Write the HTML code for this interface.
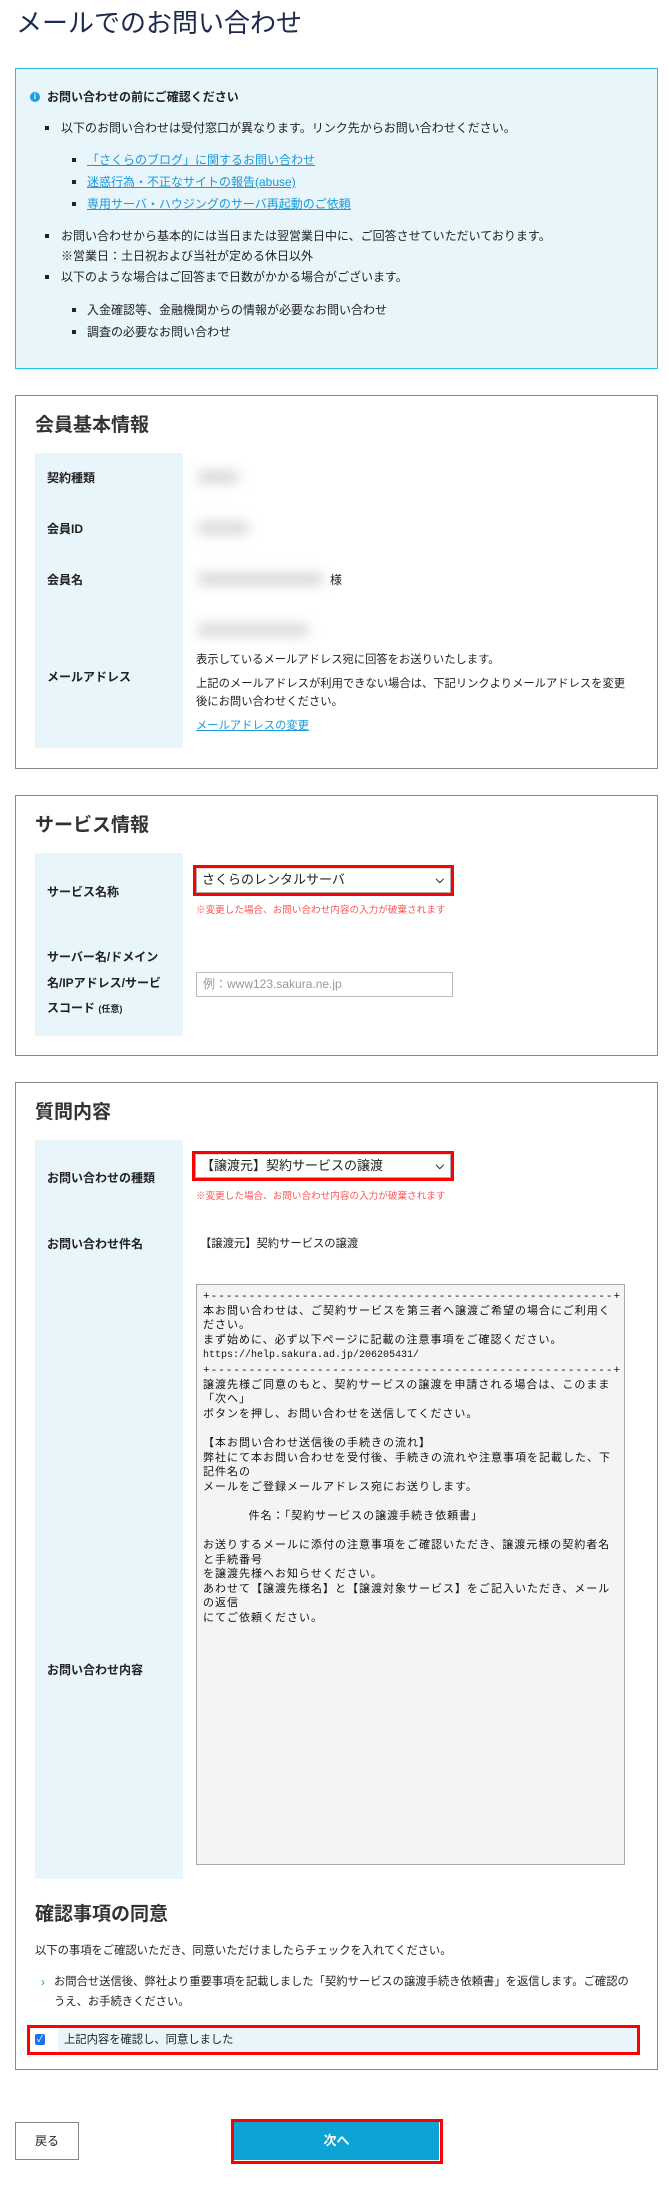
<!DOCTYPE html>
<html><head><meta charset="utf-8"><style>
*{margin:0;padding:0;box-sizing:border-box}
body{width:669px;height:2185px;background:#fff;font-family:"Liberation Sans","Noto Sans CJK JP",sans-serif;color:#222;position:relative;overflow:hidden;font-size:12px}
.a{position:absolute;white-space:nowrap}
.box{position:absolute;left:15px;width:643px;border:1px solid #8a8a8a;background:#fff}
.lab{position:absolute;left:35px;width:148px;background:#e8f6fc}
.h2{position:absolute;left:35px;font-size:19px;font-weight:bold;color:#333;line-height:24px}
.l{position:absolute;left:47px;font-size:12px;font-weight:bold;line-height:16px;color:#222}
.t{line-height:16px;transform:translateY(-8px)}
.s{font-size:11.3px}
.sq{position:absolute;width:4px;height:4px;background:#222}
a{color:#1a9ad6;text-decoration:underline}
.blur{position:absolute;background:#bbb;filter:blur(6px);opacity:.6}
.sel{position:absolute;border:3px solid #f00}
.sel div{width:100%;height:100%;background:#fff;border:1px solid #aaa;border-top:1px solid #ddd;font-size:13px;line-height:22px;padding-left:5px;position:relative}
.note{position:absolute;left:196px;font-size:9.6px;color:#f55;line-height:12px}
</style></head><body>
<div class="a" style="left:16px;top:6px;font-size:26px;line-height:34px;color:#1b2a4e">メールでのお問い合わせ</div>

<div style="position:absolute;left:15px;top:68px;width:643px;height:301px;border:1px solid #1fc3ea;background:#e8f6fc"></div>
<div style="position:absolute;left:30px;top:92px;width:10px;height:10px;border-radius:50%;background:#1b9ee0;color:#fff;font-size:8px;font-weight:bold;text-align:center;line-height:10px">i</div>
<div class="a t" style="left:47px;top:97px;font-weight:bold">お問い合わせの前にご確認ください</div>
<div class="sq" style="left:45px;top:126px"></div><div class="a t" style="left:61px;top:128px">以下のお問い合わせは受付窓口が異なります。リンク先からお問い合わせください。</div>
<div class="sq" style="left:72px;top:158px"></div><div class="a t" style="left:87px;top:160px"><a>「さくらのブログ」に関するお問い合わせ</a></div>
<div class="sq" style="left:72px;top:180px"></div><div class="a t" style="left:87px;top:182px"><a>迷惑行為・不正なサイトの報告(abuse)</a></div>
<div class="sq" style="left:72px;top:202px"></div><div class="a t" style="left:87px;top:204px"><a>専用サーバ・ハウジングのサーバ再起動のご依頼</a></div>
<div class="sq" style="left:45px;top:234px"></div><div class="a t" style="left:61px;top:236px">お問い合わせから基本的には当日または翌営業日中に、ご回答させていただいております。</div>
<div class="a t" style="left:61px;top:256px">※営業日：土日祝および当社が定める休日以外</div>
<div class="sq" style="left:45px;top:275px"></div><div class="a t" style="left:61px;top:277px">以下のような場合はご回答まで日数がかかる場合がございます。</div>
<div class="sq" style="left:72px;top:308px"></div><div class="a t" style="left:87px;top:310px">入金確認等、金融機関からの情報が必要なお問い合わせ</div>
<div class="sq" style="left:72px;top:330px"></div><div class="a t" style="left:87px;top:332px">調査の必要なお問い合わせ</div>

<!-- box1 -->
<div class="box" style="top:395px;height:374px"></div>
<div class="h2" style="top:414px">会員基本情報</div>
<div class="lab" style="top:453px;height:295px"></div>
<div class="l" style="top:470px">契約種類</div>
<div class="l" style="top:521px">会員ID</div>
<div class="l" style="top:572px">会員名</div>
<div class="l" style="top:669px">メールアドレス</div>
<div class="blur" style="left:198px;top:471px;width:40px;height:12px"></div>
<div class="blur" style="left:198px;top:522px;width:50px;height:12px"></div>
<div class="blur" style="left:198px;top:573px;width:125px;height:12px"></div>
<div class="a t" style="left:330px;top:580px">様</div>
<div class="blur" style="left:198px;top:624px;width:110px;height:12px"></div>
<div class="a t s" style="left:196px;top:660px">表示しているメールアドレス宛に回答をお送りいたします。</div>
<div class="a t s" style="left:196px;top:684px">上記のメールアドレスが利用できない場合は、下記リンクよりメールアドレスを変更</div>
<div class="a t s" style="left:196px;top:702px">後にお問い合わせください。</div>
<div class="a t s" style="left:196px;top:726px"><a>メールアドレスの変更</a></div>

<!-- box2 -->
<div class="box" style="top:795px;height:261px"></div>
<div class="h2" style="top:814px">サービス情報</div>
<div class="lab" style="top:853px;height:183px"></div>
<div class="l" style="top:884px">サービス名称</div>
<div class="sel" style="left:193px;top:865px;width:261px;height:31px"><div>さくらのレンタルサーバ<span style="position:absolute;right:6px;top:0;font-size:11px;font-weight:bold">&#x2335;</span></div></div>
<div class="note" style="top:905px">※変更した場合、お問い合わせ内容の入力が破棄されます</div>
<div class="l" style="top:949px">サーバー名/ドメイン</div>
<div class="l" style="top:975px">名/IPアドレス/サービ</div>
<div class="l" style="top:1000px">スコード <span style="font-size:9px">(任意)</span></div>
<div style="position:absolute;left:196px;top:972px;width:257px;height:25px;border:1px solid #bbb;background:#fff;font-size:12px;line-height:23px;padding-left:6px;color:#999">例：www123.sakura.ne.jp</div>

<!-- box3 -->
<div class="box" style="top:1082px;height:988px"></div>
<div class="h2" style="top:1101px">質問内容</div>
<div class="lab" style="top:1140px;height:739px"></div>
<div class="l" style="top:1170px">お問い合わせの種類</div>
<div class="sel" style="left:192px;top:1151px;width:262px;height:30px"><div>【譲渡元】契約サービスの譲渡<span style="position:absolute;right:6px;top:0;font-size:11px;font-weight:bold">&#x2335;</span></div></div>
<div class="note" style="top:1191px">※変更した場合、お問い合わせ内容の入力が破棄されます</div>
<div class="l" style="top:1236px">お問い合わせ件名</div>
<div class="a t s" style="left:200px;top:1244px">【譲渡元】契約サービスの譲渡</div>
<div class="l" style="top:1662px">お問い合わせ内容</div>
<div style="position:absolute;left:196px;top:1284px;width:429px;height:581px;background:#f4f4f4;border:1px solid #aaa"></div>
<div class="a" style="left:203px;top:1290px;font-size:11px;letter-spacing:1px;line-height:14.6px;white-space:pre;font-family:'Liberation Mono','Noto Sans CJK JP',monospace;color:#111">+-----------------------------------------------------+
本お問い合わせは、ご契約サービスを第三者へ譲渡ご希望の場合にご利用く
ださい。
まず始めに、必ず以下ページに記載の注意事項をご確認ください。
<span style="font-size:10px;letter-spacing:0">https://help.sakura.ad.jp/206205431/</span>
+-----------------------------------------------------+
譲渡先様ご同意のもと、契約サービスの譲渡を申請される場合は、このまま
「次へ」
ボタンを押し、お問い合わせを送信してください。

【本お問い合わせ送信後の手続きの流れ】
弊社にて本お問い合わせを受付後、手続きの流れや注意事項を記載した、下
記件名の
メールをご登録メールアドレス宛にお送りします。

      件名：「契約サービスの譲渡手続き依頼書」

お送りするメールに添付の注意事項をご確認いただき、譲渡元様の契約者名
と手続番号
を譲渡先様へお知らせください。
あわせて【譲渡先様名】と【譲渡対象サービス】をご記入いただき、メール
の返信
にてご依頼ください。</div>
<div class="h2" style="top:1903px">確認事項の同意</div>
<div class="a t s" style="left:35px;top:1951px">以下の事項をご確認いただき、同意いただけましたらチェックを入れてください。</div>
<div class="a t" style="left:41px;top:1982px;color:#1a9ad6">›</div>
<div class="a t s" style="left:54px;top:1982px">お問合せ送信後、弊社より重要事項を記載しました「契約サービスの譲渡手続き依頼書」を返信します。ご確認の</div>
<div class="a t s" style="left:54px;top:2002px">うえ、お手続きください。</div>
<div style="position:absolute;left:27px;top:2025px;width:613px;height:30px;border:3px solid #f00;background:#fff"></div>
<div style="position:absolute;left:58px;top:2028px;width:579px;height:24px;background:#e8f6fc"></div>
<div style="position:absolute;left:35px;top:2034px;width:10px;height:11px;background:#1a73e8;border-radius:2px;color:#fff;font-size:9px;line-height:11px;text-align:center">✓</div>
<div class="a t s" style="left:64px;top:2040px">上記内容を確認し、同意しました</div>

<div style="position:absolute;left:15px;top:2122px;width:64px;height:38px;border:1px solid #888;background:#fff;font-size:12px;line-height:36px;padding-left:19px">戻る</div>
<div style="position:absolute;left:231px;top:2119px;width:212px;height:45px;border:3px solid #f00;background:#fff"></div>
<div style="position:absolute;left:234px;top:2122px;width:205px;height:38px;background:#0ea3d5;color:#fff;font-weight:bold;font-size:13px;text-align:center;line-height:38px">次へ</div>
</body></html>
